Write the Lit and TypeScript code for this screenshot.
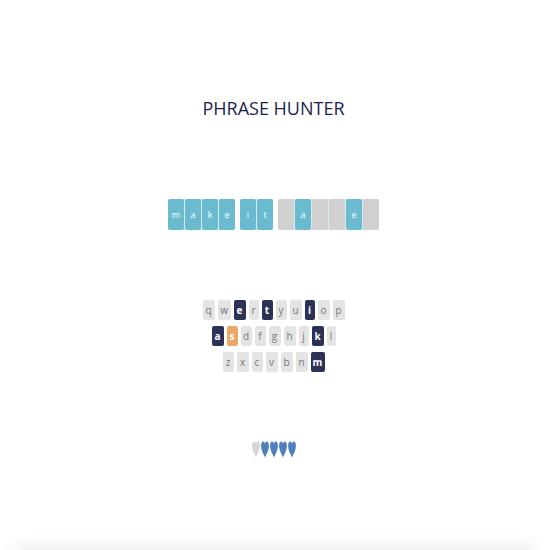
import { LitElement, html, css } from "lit";
import { customElement, property } from "lit/decorators.js";
import { classMap } from "lit/directives/class-map.js";
import { styleMap } from "lit/directives/style-map.js";

type Key = [letter: string, width: number];

const ROWS: Key[][] = [
  [["q", 12], ["w", 13], ["e", 12], ["r", 10], ["t", 11], ["y", 11], ["u", 12], ["i", 10], ["o", 12], ["p", 12]],
  [["a", 12], ["s", 11], ["d", 11], ["f", 11], ["g", 12], ["h", 12], ["j", 10], ["k", 12], ["l", 9]],
  [["z", 11], ["x", 12], ["c", 11], ["v", 12], ["b", 12], ["n", 12], ["m", 14]],
];

@customElement("phrase-board")
class PhraseBoard extends LitElement {
  @property() phrase = "";
  @property() guessed = "";

  static styles = css`
    :host { display: block; }
    .words { display: flex; justify-content: center; gap: 5px; }
    .word { display: flex; gap: 1px; background: #d8eaef; border-radius: 2px; }
    .tile {
      width: 16px;
      height: 31px;
      line-height: 31px;
      border-radius: 2px;
      background: #d0d0d0;
      color: #fff;
      font-size: 9px;
      text-align: center;
    }
    .shown { background: #6bbbd0; }
  `;

  render() {
    return html`<div class="words">
      ${this.phrase.split(" ").map(
        (word) => html`<div class="word">
          ${[...word].map((c) => {
            const shown = this.guessed.includes(c);
            return html`<div class=${classMap({ tile: true, shown })}>${shown ? c : ""}</div>`;
          })}
        </div>`
      )}
    </div>`;
  }
}

@customElement("letter-keys")
class LetterKeys extends LitElement {
  @property() right = "";
  @property() wrong = "";

  static styles = css`
    :host { display: flex; flex-direction: column; gap: 6px; }
    .row { display: flex; justify-content: center; gap: 3px; }
    .key {
      height: 20px;
      padding: 0;
      border: 0;
      border-radius: 2px;
      background: #e4e4e4;
      color: #777;
      font: inherit;
      font-size: 10px;
      line-height: 20px;
      text-align: center;
    }
    .right { background: #2c3157; color: #fff; font-weight: 700; }
    .wrong { background: #eda764; color: #fff; font-weight: 700; }
  `;

  render() {
    return ROWS.map(
      (row) => html`<div class="row">
        ${row.map(([letter, width]) => {
          const right = this.right.includes(letter);
          const wrong = this.wrong.includes(letter);
          return html`<button
            class=${classMap({ key: true, right, wrong })}
            style=${styleMap({ width: `${width}px` })}
          >${letter}</button>`;
        })}
      </div>`
    );
  }
}

@customElement("app-root")
class AppRoot extends LitElement {
  static styles = css`
    :host { display: block; font-family: "Open Sans", "Noto Sans", sans-serif; }
    .page {
      position: relative;
      box-sizing: border-box;
      min-height: 100vh;
      padding: 92px 3px 0 0;
      overflow: hidden;
      background: #fff;
    }
    .title {
      margin: 0;
      color: #1c1f49;
      font-size: 18px;
      font-weight: 400;
      line-height: 32px;
      text-align: center;
    }
    .board { margin-top: 75px; }
    .keys { margin-top: 70px; }
    .lives { display: flex; justify-content: center; gap: 1px; margin-top: 69px; }
    .heart { display: block; width: 8px; height: 17px; fill: #4f80bd; }
    .lost { fill: #d6d6d6; }
    .shade {
      position: absolute;
      right: 16px;
      bottom: -4px;
      left: 16px;
      height: 4px;
      box-shadow: 0 0 16px rgba(0, 0, 0, 0.25);
    }
  `;

  render() {
    return html`<main class="page">
      <h1 class="title">PHRASE HUNTER</h1>
      <phrase-board class="board" phrase="make it happen" guessed="makeit"></phrase-board>
      <letter-keys class="keys" right="etiakm" wrong="s"></letter-keys>
      <div class="lives">
        ${[0, 1, 1, 1, 1].map(
          (alive) => html`<svg
            class=${classMap({ heart: true, lost: !alive })}
            viewBox="0 0 8 17"
            aria-hidden="true"
          ><path d="M4 2.6C3.600 1.200 2.900.4 2 .4.9.4.1 2 .1 4.600.1 7.600.9 9.800 1.900 12 2.800 13.900 3.500 15 4 16.800 4.500 15 5.200 13.900 6.100 12 7.100 9.800 7.900 7.600 7.900 4.600 7.900 2 7.100.4 6 .4 5.100.4 4.400 1.200 4 2.600Z" /></svg>`
        )}
      </div>
      <div class="shade"></div>
    </main>`;
  }
}
